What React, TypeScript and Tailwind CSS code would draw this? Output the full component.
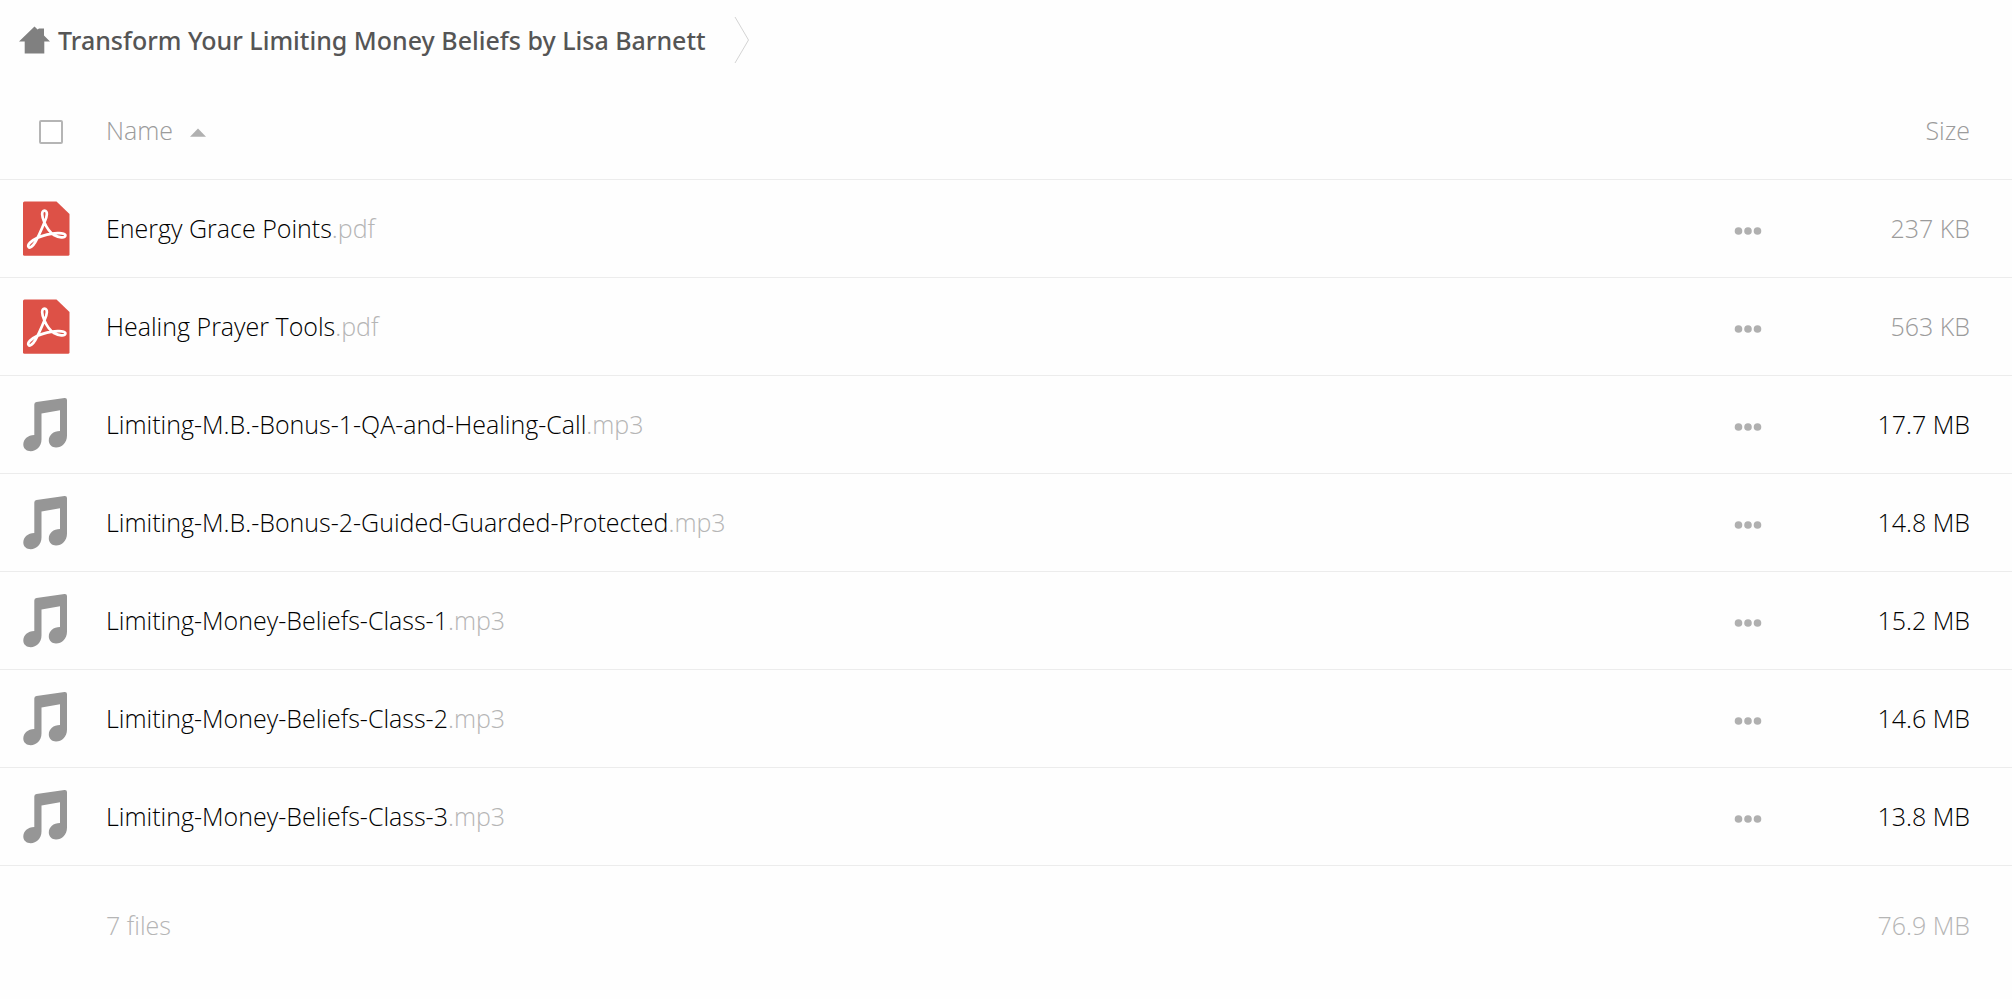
import React from "react";

type FileRow = { name: string; ext: string; size: string; kind: "pdf" | "audio" };

const files: FileRow[] = [
  { name: "Energy Grace Points", ext: ".pdf", size: "237 KB", kind: "pdf" },
  { name: "Healing Prayer Tools", ext: ".pdf", size: "563 KB", kind: "pdf" },
  { name: "Limiting-M.B.-Bonus-1-QA-and-Healing-Call", ext: ".mp3", size: "17.7 MB", kind: "audio" },
  { name: "Limiting-M.B.-Bonus-2-Guided-Guarded-Protected", ext: ".mp3", size: "14.8 MB", kind: "audio" },
  { name: "Limiting-Money-Beliefs-Class-1", ext: ".mp3", size: "15.2 MB", kind: "audio" },
  { name: "Limiting-Money-Beliefs-Class-2", ext: ".mp3", size: "14.6 MB", kind: "audio" },
  { name: "Limiting-Money-Beliefs-Class-3", ext: ".mp3", size: "13.8 MB", kind: "audio" },
];

function HomeIcon() {
  return (
    <svg width="31" height="28" viewBox="0 0 31 28" fill="#808080" aria-hidden="true">
      <path d="M15.5 0.5 L18.6 3.6 L20 2.5 H25 V9.5 L31 15.6 H25.3 V27.5 H5.7 V15.6 H0 Z" />
    </svg>
  );
}

function PdfIcon() {
  return (
    <svg width="47" height="55" viewBox="0 0 47 55" aria-hidden="true">
      <path d="M1.5 0.5 H33.5 L46.5 13 V53.2 Q46.5 54.7 45 54.7 H1.5 Q0 54.7 0 53.2 V2 Q0 0.5 1.5 0.5 Z" fill="#dd5147" />
      <path
        d="M21.4 21.5 C18.6 15.5 18.2 9.6 21.5 9.6 C24.9 9.6 24.4 15.5 21.4 21.5 C18.5 28.5 15.5 35.5 12.2 41.3 C9.8 45.3 7 47.5 5.6 46 C4 44 8 39.7 14 37 C20 34.5 27.5 32.7 34.5 32.2 C39.8 31.9 42.8 33.2 42.3 35 C41.7 37.2 36 36.8 31 34 C26.5 31.2 23.8 27 21.4 21.5 Z"
        fill="none"
        stroke="#ffffff"
        strokeWidth="2.7"
        strokeLinejoin="round"
      />
    </svg>
  );
}

function MusicIcon() {
  return (
    <svg width="47" height="55" viewBox="0 0 47 55" fill="#969696" aria-hidden="true">
      <path d="M13.5 5 L41.5 1 Q44 0.8 44 3 V38.5 C44 46 38.8 50.5 33 50.5 C29 50.5 25.8 47.7 25.8 43.5 C25.8 38.2 30.3 34 37 34 V13.2 L18.5 16.5 V42.3 C18.5 49.8 13.3 54.2 7.8 54.2 C3.5 54.2 0.3 51.5 0.3 47.5 C0.3 42.4 4.8 38 11.3 38 V7.5 Q11.3 5.4 13.5 5 Z" />
    </svg>
  );
}

export default function App() {
  return (
    <main className="min-h-screen bg-[#fefefe] font-['Open_Sans',sans-serif] text-[25px] leading-9 font-light text-black">
      <nav aria-label="Breadcrumb" className="flex h-20 items-center pl-[19px]">
        <a href="#" className="flex items-center gap-2 font-['Noto_Sans',sans-serif] text-[25px] font-medium text-[#555555]">
          <HomeIcon />
          <span>Transform Your Limiting Money Beliefs by Lisa Barnett</span>
        </a>
        <svg className="ml-7" width="16" height="48" viewBox="0 0 16 48" fill="none" stroke="#d4d4d4" aria-hidden="true">
          <path d="M1 1 L14.5 24 L1 47" />
        </svg>
      </nav>

      <table className="w-full table-fixed border-collapse">
        <colgroup>
          <col className="w-[106px]" />
          <col />
          <col className="w-24" />
          <col className="w-[216px]" />
        </colgroup>
        <thead>
          <tr className="h-[99px] border-b border-[#ececec] text-[#9b9b9b]">
            <th className="pt-0.5 pl-[39px] text-left">
              <input
                type="checkbox"
                aria-label="Select all files"
                className="mt-1 block size-6 appearance-none rounded-xs border-2 border-[#b5b5b5] bg-white checked:bg-[#b5b5b5]"
              />
            </th>
            <th className="pt-0.5 text-left font-light">
              <button type="button" className="flex items-center gap-4">
                Name
                <svg className="mt-1" width="18" height="9" viewBox="0 0 18 9" fill="#b0b0b0" aria-hidden="true">
                  <path d="M9 0.5 L17 8.8 H1 Z" />
                </svg>
              </button>
            </th>
            <td />
            <th className="pt-0.5 pr-[42px] text-right font-light">Size</th>
          </tr>
        </thead>
        <tbody>
          {files.map((file) => (
            <tr key={file.name} className="h-[98px] border-b border-[#ececec]">
              <td className="pl-[23px]">
                {file.kind === "pdf" ? <PdfIcon /> : <MusicIcon />}
              </td>
              <td className="truncate">
                <a href="#">
                  {file.name}
                  <span className="text-[#b5b5b5]">{file.ext}</span>
                </a>
              </td>
              <td>
                <button type="button" aria-label={`Actions for ${file.name}`} className="mt-1.5 flex h-10 w-full items-center justify-center">
                  <svg width="28" height="8" viewBox="0 0 28 8" fill="#b0b0b0" aria-hidden="true">
                    <circle cx="4.5" cy="4" r="3.8" />
                    <circle cx="14" cy="4" r="3.8" />
                    <circle cx="23.5" cy="4" r="3.8" />
                  </svg>
                </button>
              </td>
              <td className={file.kind === "pdf" ? "pr-[42px] text-right text-[#9b9b9b]" : "pr-[42px] text-right"}>
                {file.size}
              </td>
            </tr>
          ))}
        </tbody>
        <tfoot>
          <tr className="h-[120px] text-[#b5b5b5]">
            <td />
            <td>7 files</td>
            <td />
            <td className="pr-[42px] text-right">76.9 MB</td>
          </tr>
        </tfoot>
      </table>
    </main>
  );
}
